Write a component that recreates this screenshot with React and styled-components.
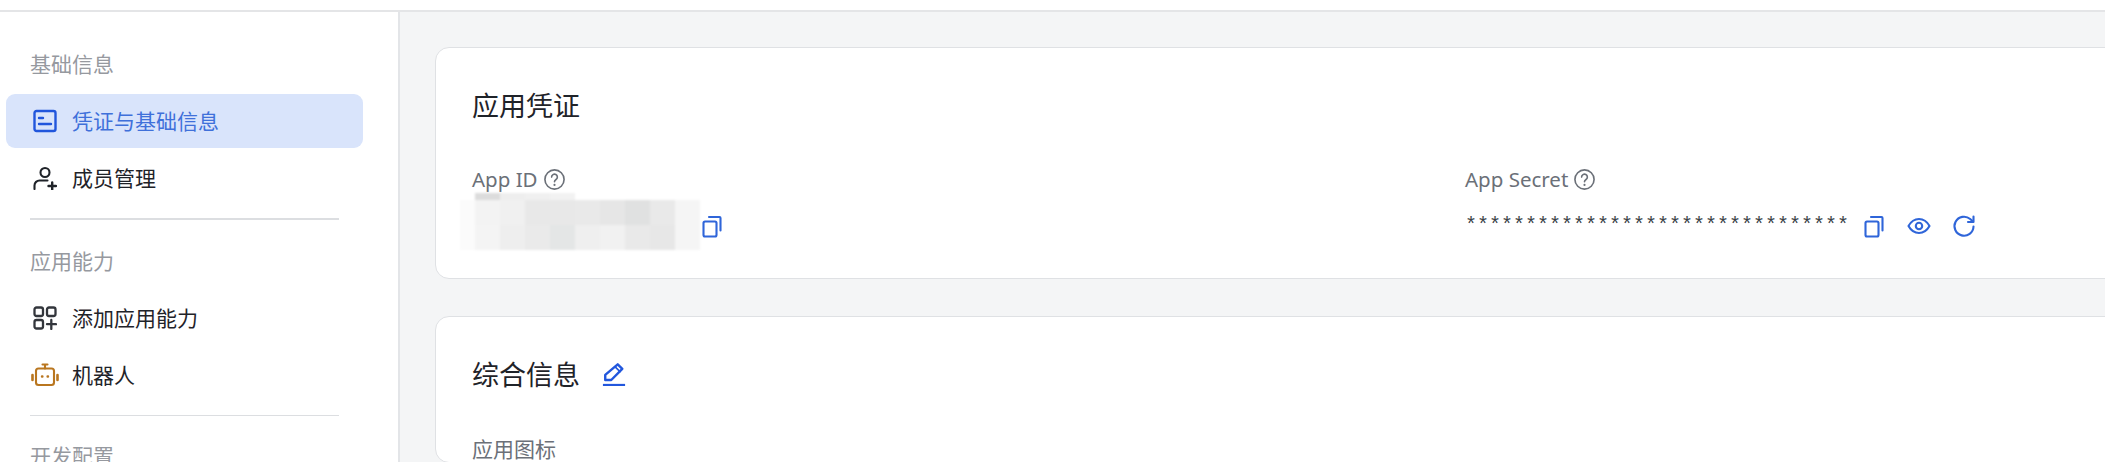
import React from "react";
import styled, { createGlobalStyle } from "styled-components";

const Global = createGlobalStyle`
  html, body { margin: 0; padding: 0; background: #fff; }
  body { font-family: "Noto Sans", "Noto Sans CJK SC", sans-serif; overflow: hidden; }
  * { box-sizing: border-box; }
`;

const Page = styled.div`
  width: 2105px;
  height: 462px;
  overflow: hidden;
  display: flex;
  flex-direction: column;
`;
const TopBar = styled.header`
  flex: 0 0 12px;
  background: #fff;
  border-bottom: 2px solid #e4e5e7;
`;
const Body = styled.div`
  flex: 1;
  display: flex;
  min-height: 0;
`;
const Sidebar = styled.nav`
  flex: 0 0 400px;
  background: #fff;
  border-right: 2px solid #e3e5e8;
  padding: 37px 0 0 6px;
  font-family: "Noto Sans CJK SC", "Noto Sans", sans-serif;
`;
const GroupTitle = styled.div`
  font-size: 21px;
  line-height: 28px;
  color: #96999f;
  padding-left: 24px;
  margin-bottom: ${p => p.$after}px;
`;
const NavItem = styled.div`
  width: 357px;
  height: 54px;
  margin-bottom: 3px;
  padding-left: 27px;
  display: flex;
  align-items: center;
  gap: 15px;
  border-radius: 9px;
  font-size: 21px;
  background: ${p => (p.$active ? "#d9e4fb" : "transparent")};
  color: ${p => (p.$active ? "#3f70da" : "#1f2329")};
`;
const NavText = styled.span`
  margin-top: -2px;
`;
const IconSlot = styled.svg`
  width: 24px;
  height: 24px;
  flex: none;
  display: block;
  color: ${p => p.$color || "currentColor"};
`;
const WideIcon = styled(IconSlot)`
  width: 28px;
  margin: 0 -2px;
`;
const Divider = styled.div`
  width: 309px;
  height: ${p => (p.$thick ? 2 : 1)}px;
  margin: 13px 0 ${p => (p.$thick ? 26 : 25)}px 24px;
  background: #dcdee1;
`;
const Main = styled.main`
  flex: 1;
  min-width: 0;
  overflow: hidden;
  background: #f4f5f6;
  padding: 35px 0 0 35px;
`;
const Card = styled.section`
  width: 1900px;
  height: ${p => p.$h || "auto"};
  margin-bottom: 37px;
  padding: 39px 36px 0;
  background: #fff;
  border: 1px solid #dfe1e4;
  border-radius: 14px;
`;
const CardTitle = styled.h2`
  margin: 0;
  display: flex;
  align-items: center;
  gap: 22px;
  font: 400 27px/36px "Noto Sans CJK SC", sans-serif;
  color: #1f2329;
`;
const CredGrid = styled.div`
  display: grid;
  grid-template-columns: 993px 1fr;
  margin-top: 42px;
`;
const Label = styled.div`
  display: flex;
  align-items: center;
  gap: 5px;
  font-size: 20.5px;
  line-height: 28px;
  color: #6b7078;
`;
const PlainLabel = styled(Label)`
  margin-top: 42px;
  font-family: "Noto Sans CJK SC", sans-serif;
  font-size: 21px;
`;
const ValueRow = styled.div`
  display: flex;
  align-items: flex-start;
`;
const Mosaic = styled.div`
  display: grid;
  grid-template-columns: 15px repeat(9, 25px);
  grid-template-rows: 7px 25px 25px;
  margin-left: -12px;
  filter: blur(0.8px);
`;
const MosaicCell = styled.i`
  display: block;
  background: ${p => p.$c};
`;
const ActionIcon = styled.svg`
  width: 24px;
  height: 24px;
  display: block;
  flex: none;
  margin-top: 21px;
  color: #2f65d9;
`;
const SecretRow = styled.div`
  display: flex;
  align-items: flex-start;
  gap: 21px;
`;
const Stars = styled.span`
  font: 400 20px/24px "Liberation Mono", monospace;
  color: #3b3f46;
  margin-top: 21px;
  margin-right: -8px;
`;
const HelpIcon = styled.svg`
  width: 23px;
  height: 23px;
  display: block;
  flex: none;
`;

const W = "#ffffff";
const mosaic = [
  [W, "#dcdcdc", "#eeeeee", "#f0f0f0", "#f2f2f2", W, W, W, W, W],
  ["#fbfbfb", "#f3f3f3", "#f0f0f0", "#e8e8e8", "#e8e8e8", "#e9e9e9", "#e6e6e6", "#e0e1e1", "#e9e9e9", "#f5f5f5"],
  ["#fbfbfb", "#f4f4f4", "#eeeeee", "#eaeaea", "#e4e6e6", "#efefef", "#f1f1f1", "#e9e9e9", "#e7e7e7", "#f5f5f5"],
];

const Svg = ({ as: C = IconSlot, children, ...rest }) => (
  <C viewBox="0 0 24 24" fill="none" stroke="currentColor" strokeWidth="2.1" strokeLinecap="round" strokeLinejoin="round" {...rest}>
    {children}
  </C>
);

const CardIcon = p => (
  <Svg strokeWidth="2.4" {...p}>
    <rect x="1.5" y="2" width="21" height="20" rx="2" />
    <path d="M6 9h4M6 15h12" />
  </Svg>
);
const UserAdd = p => (
  <Svg {...p}>
    <circle cx="12" cy="6.5" r="4.5" />
    <path d="M1.5 23v-3.5c0-3 2.5-5 5-5h8" />
    <path d="M15.5 20h7.5M19.2 16.5v7" strokeWidth="2.4" />
  </Svg>
);
const Apps = p => (
  <Svg strokeWidth="2.3" {...p}>
    <rect x="1.5" y="1.5" width="8.5" height="8.5" rx="2" />
    <rect x="14" y="1.5" width="8.5" height="8.5" rx="2" />
    <rect x="1.5" y="14" width="8.5" height="8.5" rx="2" />
    <path d="M14 18.2h9M18.3 14v9" />
  </Svg>
);
const Robot = p => (
  <Svg as={WideIcon} viewBox="-2 0 28 24" {...p}>
    <rect x="3" y="5.5" width="18" height="16.5" rx="2.5" />
    <path d="M12 5.5V2M9.5 1.5h5" />
    <path d="M-.5 12v5M24.5 12v5" strokeWidth="2.6" />
    <path d="M9 13.5h.4M14.6 13.5h.4" strokeWidth="2.4" />
  </Svg>
);
const Help = p => (
  <Svg as={HelpIcon} strokeWidth="1.7" {...p}>
    <circle cx="12" cy="12" r="10" />
    <path d="M9 9.5a3 3 0 1 1 4.6 2.5c-1 .7-1.6 1.2-1.6 2.3" />
    <path d="M12 17.6v.1" strokeWidth="2.2" />
  </Svg>
);
const Copy = p => (
  <Svg as={ActionIcon} {...p}>
    <rect x="3.5" y="7.5" width="13" height="15" rx="1.5" />
    <path d="M9 3h10.5a1 1 0 0 1 1 1v12.5" />
  </Svg>
);
const Eye = p => (
  <Svg as={ActionIcon} {...p}>
    <path d="M1.5 12C4 7.5 7.8 5 12 5s8 2.5 10.5 7C20 16.5 16.2 19 12 19S4 16.5 1.5 12Z" />
    <circle cx="12" cy="12" r="3.2" />
  </Svg>
);
const Refresh = p => (
  <Svg as={ActionIcon} {...p}>
    <path d="M21.5 12.5A9.5 9.5 0 1 1 18.2 5L21 7.5" />
    <path d="M21.5 2.5v5.5h-5.5" />
  </Svg>
);
const Edit = () => (
  <Svg viewBox="0 0 26 26" strokeWidth="2.6" $color="#2257dd">
    <path d="M17 2.5l5 5L10 19.5H3.5V14Z" />
    <path d="M14.5 5.5l5 5" strokeWidth="1.8" />
    <path d="M1 25h24" strokeWidth="2.6" strokeLinecap="butt" />
  </Svg>
);

export default function App() {
  return (
    <Page>
      <Global />
      <TopBar />
      <Body>
        <Sidebar>
          <GroupTitle $after={17}>基础信息</GroupTitle>
          <NavItem $active>
            <CardIcon $color="#2156dc" />
            <NavText>凭证与基础信息</NavText>
          </NavItem>
          <NavItem>
            <UserAdd />
            <NavText>成员管理</NavText>
          </NavItem>
          <Divider $thick />
          <GroupTitle $after={17}>应用能力</GroupTitle>
          <NavItem>
            <Apps $color="#33363c" />
            <NavText>添加应用能力</NavText>
          </NavItem>
          <NavItem>
            <Robot $color="#b9761f" />
            <NavText>机器人</NavText>
          </NavItem>
          <Divider />
          <GroupTitle $after={16}>开发配置</GroupTitle>
        </Sidebar>
        <Main>
          <Card $h="232px">
            <CardTitle>应用凭证</CardTitle>
            <CredGrid>
              <div>
                <Label>
                  App ID <Help />
                </Label>
                <ValueRow>
                  <Mosaic>
                    {mosaic.flat().map((c, i) => (
                      <MosaicCell key={i} $c={c} />
                    ))}
                  </Mosaic>
                  <Copy />
                </ValueRow>
              </div>
              <div>
                <Label>
                  App Secret <Help />
                </Label>
                <SecretRow>
                  <Stars>********************************</Stars>
                  <Copy />
                  <Eye />
                  <Refresh />
                </SecretRow>
              </div>
            </CredGrid>
          </Card>
          <Card>
            <CardTitle>
              综合信息
              <Edit />
            </CardTitle>
            <PlainLabel>应用图标</PlainLabel>
          </Card>
        </Main>
      </Body>
    </Page>
  );
}
